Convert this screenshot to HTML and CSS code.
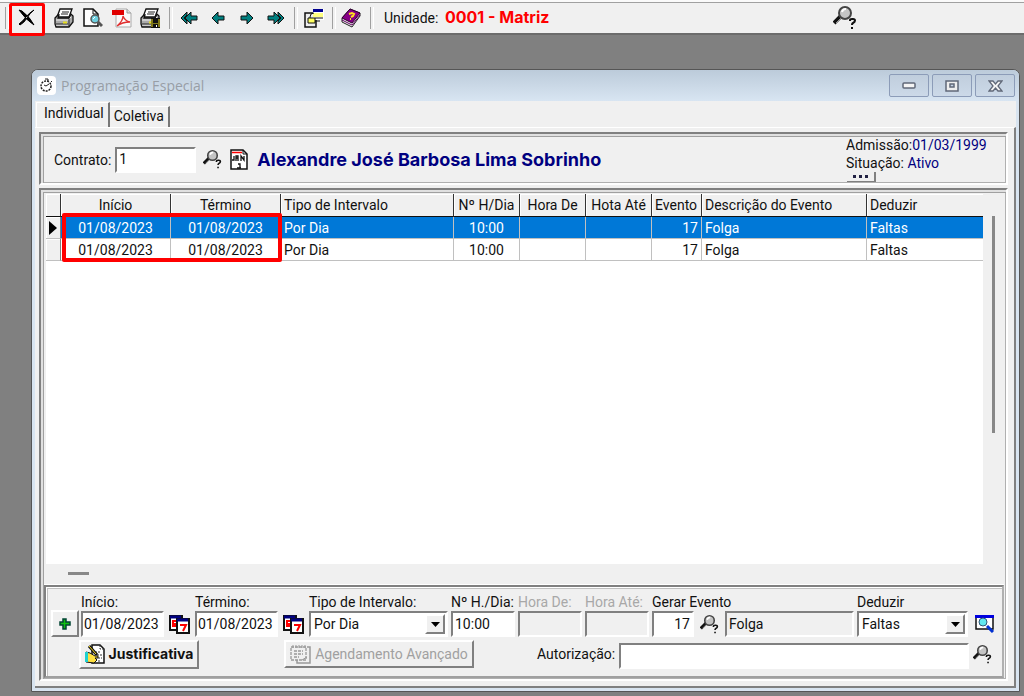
FILE: index.html
```html
<!DOCTYPE html>
<html lang="pt-BR">
<head>
    <title>Programação Especial</title>
    <meta charset="UTF-8">
    <link rel="stylesheet" href="styles.css">
</head>
<body>

<!-- shared icons -->
<svg class="defs" aria-hidden="true">
    <symbol id="printer" viewBox="0 0 20 20">
        <path d="M6 1h12l-3 8H3z" fill="#fff" stroke="#111" stroke-width="1.300"/>
        <path d="M8 4h7M7 6h7" stroke="#222"/>
        <path d="M1 10l3-3h1l-1 3h11l2-4 2 2v6l-4 5H2l-1-3z" fill="#aaa" stroke="#111" stroke-width="1.300"/>
        <path d="M2 12h12l3-3M2 17h12" stroke="#eee" fill="none"/>
        <path d="M2 16h12M15 10v8" stroke="#222"/>
        <path d="M9 14.500h4" stroke="#e8e020" stroke-width="2"/>
    </symbol>
    <symbol id="lupa" viewBox="0 0 24 24">
        <path d="M1 17l7-7" stroke="#111" stroke-width="4"/>
        <path d="M3 17l5-5" stroke="#999"/>
        <circle cx="12" cy="7" r="6" fill="#c4c4c4" stroke="#444" stroke-width="2"/>
        <path d="M9 6a4 4 0 0 1 4-3" fill="none" stroke="#fff" stroke-width="2"/>
        <path d="M17 15v-1q0-1 2-1h1q2 0 2 1.500t-2 2.500q-1 .5-1 2M18 22h2" fill="none" stroke="#111" stroke-width="2"/>
    </symbol>
    <symbol id="seta" viewBox="0 0 14 14">
        <path d="M1 7l6-6v4h6v4H7v4z" fill="#008080" stroke="#111"/>
    </symbol>
    <symbol id="seta2" viewBox="0 0 18 14">
        <path d="M5 7l6-6v4h6v4h-6v4z" fill="#008080" stroke="#111"/>
        <path d="M1 7l6-6v3L4 7l3 3v3z" fill="#008080" stroke="#111"/>
    </symbol>
    <symbol id="calendario" viewBox="0 0 21 19">
        <path d="M1 1h12v14H1z" fill="#fff" stroke="#111" stroke-width="2"/>
        <path d="M1 2h11" stroke="#000080" stroke-width="3"/>
        <path d="M7 6H4v3h3M6 8v3H3" fill="none" stroke="#f00" stroke-width="2"/>
        <path d="M8 4h12v14H8z" fill="#fff" stroke="#111" stroke-width="2"/>
        <path d="M8 5h11" stroke="#000080" stroke-width="3"/>
        <path d="M11 10h6l-3 6" fill="none" stroke="#f00" stroke-width="2"/>
    </symbol>
    <symbol id="drop" viewBox="0 0 9 5">
        <path d="M0 0h9L4.500 5z" fill="#000"/>
    </symbol>
</svg>

<header class="toolbar">
    <span class="sep"></span>
    <button class="tool marked" title="Fechar"><svg width="18" height="18" viewBox="0 0 18 18"><path d="M1 1l3 1q8 6 12 14q-8-5-15-15zM16 1q-5 3-8 7t-7 7l1 1q4-2 7-7t7-8z" fill="#000" stroke="#000"/></svg></button>
    <span class="gap"></span>
    <button class="tool" title="Imprimir"><svg width="20" height="20"><use href="#printer"/></svg></button>
    <button class="tool" title="Visualizar"><svg width="20" height="20" viewBox="0 0 20 20"><path d="M1 1h9l5 5v12H1z" fill="#fff" stroke="#111" stroke-width="1.500"/><path d="M10 1v5h5" fill="none" stroke="#111"/><path d="M15 14l4 4" stroke="#555" stroke-width="3"/><circle cx="12" cy="11" r="4" fill="#6fd0e0" stroke="#555" stroke-width="1.500"/><path d="M10 11l2-2" stroke="#fff"/></svg></button>
    <button class="tool" title="PDF"><svg width="20" height="20" viewBox="0 0 20 20"><path d="M4 1h11l4 4v14H4z" fill="#fafafa" stroke="#aaa"/><path d="M15 1v4h4" fill="#ddd" stroke="#999"/><path d="M0 2h12v5H0z" fill="#e00000"/><path d="M11 8q0 5-6 10q5-4 13-4q-5-1-7-6z" fill="none" stroke="#e03030" stroke-width="1.300"/></svg></button>
    <button class="tool" title="Imprimir e salvar"><svg width="21" height="20" viewBox="0 0 21 20"><use href="#printer" width="20" height="20"/><path d="M11 10h9v10h-9z" fill="#111"/><path d="M11 11h2v8h-2zM18 11h2v8h-2zM13 15h5v1h-5z" fill="#807818"/><path d="M16 17h1v2h-1z" fill="#fff"/></svg></button>
    <span class="sep"></span>
    <button class="tool" title="Primeiro"><svg width="18" height="14"><use href="#seta2"/></svg></button>
    <button class="tool" title="Anterior"><svg width="14" height="14"><use href="#seta"/></svg></button>
    <button class="tool flip" title="Próximo"><svg width="14" height="14"><use href="#seta"/></svg></button>
    <button class="tool flip" title="Último"><svg width="18" height="14"><use href="#seta2"/></svg></button>
    <span class="sep"></span>
    <button class="tool" title="Permissões"><svg width="20" height="20" viewBox="0 0 20 20"><path d="M1 5h11v14H1z" fill="#eee" stroke="#111" stroke-width="1.500"/><path d="M9 1h11v11H9z" fill="#fff"/><path d="M9 1h10v3H9z" fill="#000090"/><path d="M9 5h10v4H9z" fill="#ffff80"/><path d="M6 12V9q0-4 4-4M11 10h8M10 13h6" stroke="#111" fill="none"/><path d="M4 10h7v5H4z" fill="#ffff60" stroke="#111"/></svg></button>
    <span class="sep"></span>
    <button class="tool" title="Ajuda"><svg width="21" height="20" viewBox="0 0 21 20"><path d="M9 1l10 4v3l-8 11-10-5v-4z" fill="#eee" stroke="#222"/><path d="M9 1l10 4-8 10L1 10z" fill="#860086" stroke="#300030"/><path d="M1 12l10 5 8-10" fill="none" stroke="#600060"/><path d="M8 6l3-1 2 1-1 2-2 1M9 11h1" fill="none" stroke="#ffe020" stroke-width="2"/></svg></button>
    <span class="sep"></span>
    <span class="unit">Unidade: <b>0001 - Matriz</b></span>
    <button class="tool find" title="Pesquisar"><svg width="24" height="24"><use href="#lupa"/></svg></button>
</header>

<main class="desktop">
<section class="window">
    <div class="titlebar">
        <span class="app-icon"><svg width="15" height="15" viewBox="0 0 15 15"><circle cx="7" cy="8" r="5" fill="none" stroke="#222" stroke-width="1.500" stroke-dasharray="2 1"/><path d="M7 8l3-2M7 8L5 7M6 1h3v2M12 3l1 1" stroke="#222" fill="none"/></svg></span>
        <h1>Programação Especial</h1>
        <button class="win-btn" title="Minimizar"><svg width="14" height="7" viewBox="0 0 14 7"><rect x="1" y="1" width="12" height="5" rx="1" fill="#f4f4f4" stroke="#606878" stroke-width="1.500"/></svg></button>
        <button class="win-btn" title="Maximizar"><svg width="14" height="12" viewBox="0 0 14 12"><rect x="1" y="1" width="12" height="10" fill="#eee" stroke="#606878" stroke-width="1.500"/><rect x="5" y="4" width="4" height="3" fill="#c8d4e4" stroke="#606878" stroke-width="1.500"/></svg></button>
        <button class="win-btn" title="Fechar"><svg width="15" height="12" viewBox="0 0 15 12"><path d="M1 1h4l2.500 3L10 1h4l-4 5 4 5h-4L7.500 8 5 11H1l4-5z" fill="#f4f4f4" stroke="#606878" stroke-width="1.300"/></svg></button>
    </div>

    <div class="client">
        <nav class="tabs">
            <button class="tab active">Individual</button>
            <button class="tab">Coletiva</button>
        </nav>

        <div class="page">
            <!-- contract -->
            <div class="panel contract">
                <label for="contrato">Contrato:</label>
                <input type="text" id="contrato" value="1">
                <button class="icon-btn" title="Pesquisar"><svg width="19" height="19"><use href="#lupa"/></svg></button>
                <button class="icon-btn" title="Calendário"><svg width="18" height="21" viewBox="0 0 18 21"><path d="M1 1h12l4 4v15H1z" fill="#fff" stroke="#111" stroke-width="1.500"/><path d="M13 1v4h4" fill="none" stroke="#111"/><path d="M2 3.500h10" stroke="#f00" stroke-width="1.500"/><path d="M4 7v4H2M6 12V7h2v5M6 9h2M11 12V7l3 4V7v5M8 15h2v4M7 19h4" fill="none" stroke="#111" stroke-width="1.300"/></svg></button>
                <strong class="employee">Alexandre José Barbosa Lima Sobrinho</strong>
                <div class="status">
                    <div>Admissão:<span>01/03/1999</span></div>
                    <div>Situação: <span>Ativo</span></div>
                    <button class="more" title="Mais"><i></i><i></i><i></i></button>
                </div>
            </div>

            <div class="panel body">
                <div class="grid">
                    <div class="sheet">
                        <table>
                            <colgroup>
                                <col class="c-mark"><col class="c-date"><col class="c-date"><col class="c-type">
                                <col class="c-hour"><col class="c-hour"><col class="c-hour"><col class="c-event">
                                <col class="c-desc"><col>
                            </colgroup>
                            <thead>
                                <tr>
                                    <th></th>
                                    <th class="mid">Início</th>
                                    <th class="mid">Término</th>
                                    <th>Tipo de Intervalo</th>
                                    <th class="mid">Nº H/Dia</th>
                                    <th class="mid">Hora De</th>
                                    <th class="mid">Hota Até</th>
                                    <th>Evento</th>
                                    <th>Descrição do Evento</th>
                                    <th>Deduzir</th>
                                </tr>
                            </thead>
                            <tbody>
                                <tr class="selected">
                                    <th><svg width="8" height="14" viewBox="0 0 8 14"><path d="M0 0l8 7-8 7z"/></svg></th>
                                    <td class="mid">01/08/2023</td>
                                    <td class="mid">01/08/2023</td>
                                    <td>Por Dia</td>
                                    <td class="mid">10:00</td>
                                    <td></td>
                                    <td></td>
                                    <td class="num">17</td>
                                    <td>Folga</td>
                                    <td>Faltas</td>
                                </tr>
                                <tr>
                                    <th></th>
                                    <td class="mid">01/08/2023</td>
                                    <td class="mid">01/08/2023</td>
                                    <td>Por Dia</td>
                                    <td class="mid">10:00</td>
                                    <td></td>
                                    <td></td>
                                    <td class="num">17</td>
                                    <td>Folga</td>
                                    <td>Faltas</td>
                                </tr>
                            </tbody>
                        </table>
                        <div class="highlight"></div>
                    </div>
                    <div class="vscroll"><span></span></div>
                    <div class="hscroll"><span></span></div>
                </div>

                <!-- edit form -->
                <form class="edit">
                    <div class="line">
                        <button type="button" class="btn add" title="Incluir"><svg width="12" height="12" viewBox="0 0 12 12"><path d="M4 1h3v3h4v3H7v4H4V7H1V4h3z" fill="#10c010" stroke="#043" stroke-width="1.500"/></svg></button>
                        <div class="field date"><label for="inicio">Início:</label><input type="text" id="inicio" value="01/08/2023"></div>
                        <button type="button" class="icon-btn cal" title="Calendário"><svg width="21" height="19"><use href="#calendario"/></svg></button>
                        <div class="field date"><label for="termino">Término:</label><input type="text" id="termino" value="01/08/2023"></div>
                        <button type="button" class="icon-btn cal" title="Calendário"><svg width="21" height="19"><use href="#calendario"/></svg></button>
                        <div class="field type"><label for="tipo">Tipo de Intervalo:</label>
                            <div class="combo"><select id="tipo"><option>Por Dia</option></select><span><svg width="9" height="5"><use href="#drop"/></svg></span></div>
                        </div>
                        <div class="field hour"><label for="horas">Nº H./Dia:</label><input type="text" id="horas" value="10:00"></div>
                        <div class="field hour"><label for="de" class="off">Hora De:</label><input type="text" id="de" disabled></div>
                        <div class="field hour"><label for="ate" class="off">Hora Até:</label><input type="text" id="ate" disabled></div>
                        <div class="field event"><label for="evento">Gerar Evento</label><input type="text" id="evento" value="17"></div>
                        <button type="button" class="icon-btn cal" title="Pesquisar"><svg width="19" height="19"><use href="#lupa"/></svg></button>
                        <input type="text" class="desc" value="Folga" readonly aria-label="Descrição do Evento">
                        <div class="field deduct"><label for="deduzir">Deduzir</label>
                            <div class="combo"><select id="deduzir"><option>Faltas</option></select><span><svg width="9" height="5"><use href="#drop"/></svg></span></div>
                        </div>
                        <button type="button" class="icon-btn cal last" title="Visualizar"><svg width="20" height="18" viewBox="0 0 20 18"><path d="M1 1h17v13H1z" fill="#fff" stroke="#111" stroke-width="1.500"/><path d="M0 1.500h19" stroke="#0000e0" stroke-width="3"/><path d="M12 11l6 6" stroke="#0030d0" stroke-width="3"/><circle cx="8" cy="7" r="4" fill="#60e8f0" stroke="#357"/></svg></button>
                    </div>
                    <div class="line second">
                        <button type="button" class="btn justify"><svg width="20" height="20" viewBox="0 0 20 20"><path d="M7 1h8l4 4v14H7z" fill="#fff" stroke="#111" stroke-width="1.500"/><path d="M15 1v4h4M10 8h6M12 11h5M13 14h4M13 17h3" stroke="#333" fill="none" stroke-dasharray="2 1"/><path d="M1 8l4 1 5 3h3v2h-3l2 2-3 3-8-1z" fill="#ffe040" stroke="#111"/><path d="M0 8h3v10H0z" fill="#20d0d0"/><path d="M4 2l8 9" stroke="#111" stroke-width="3"/><path d="M4 2l7 8" stroke="#ffe020"/></svg>Justificativa</button>
                        <button type="button" class="btn advanced" disabled><svg width="21" height="20" viewBox="0 0 21 20"><path d="M17 3h3v16H7v-3" fill="none" stroke="#999" stroke-width="1.500"/><path d="M1 3h15v13H1zM4 7h9M4 10h9M4 13h5" fill="none" stroke="#999" stroke-width="1.300" stroke-dasharray="3 1"/><path d="M3 1v3M6 1v3M9 1v3M12 1v3M15 1v3M12 16l5-3" stroke="#999"/></svg>Agendamento Avançado</button>
                        <label for="autorizacao">Autorização:</label>
                        <input type="text" id="autorizacao" class="auth">
                        <button type="button" class="icon-btn last" title="Pesquisar"><svg width="19" height="19"><use href="#lupa"/></svg></button>
                    </div>
                </form>
            </div>
        </div>
    </div>
</section>
</main>

</body>
</html>
```
FILE: styles.css
```css
* {
  box-sizing: border-box;
}

body {
  margin: 0;
  min-height: 100vh;
  display: flex;
  flex-direction: column;
  background-color: #808080;
  color: #111;
  font: 14px/18px Roboto, "Liberation Sans", sans-serif;
}

button, input, select {
  font: inherit;
  color: inherit;
}

button {
  padding: 0;
  border: 0;
  background: none;
}

svg {
  display: block;
}

.defs {
  position: absolute;
  width: 0;
  height: 0;
}

/* Toolbar */
.toolbar {
  display: flex;
  align-items: center;
  height: 35px;
  padding-left: 1px;
  background-color: #f0f0f0;
  border-top: 2px solid #fafafa;
  border-bottom: 2px solid #6c6c6c;
  box-shadow: inset 0 1px #a0a0a0;
}

.tool {
  display: flex;
  align-items: center;
  justify-content: center;
  width: 29px;
  height: 28px;
  flex: none;
}

.flip svg {
  transform: scaleX(-1);
}

.sep {
  width: 9px;
  height: 22px;
  flex: none;
}

.sep::before {
  content: "";
  display: block;
  width: 2px;
  height: 22px;
  margin-left: 4px;
  border-left: 1px solid #a0a0a0;
  border-right: 1px solid #fff;
}

.gap {
  width: 6px;
  flex: none;
}

/* Red callout round the close button */
.marked {
  position: relative;
  width: 33px;
}

.marked::after {
  content: "";
  position: absolute;
  inset: -1px -2px -4px -1px;
  border: 3px solid #f00;
  border-radius: 2px;
}

.unit {
  width: 446px;
  margin-left: 9px;
  white-space: nowrap;
}

.unit b {
  margin-left: 3px;
  color: #f00;
  font: bold 16px/18px Inter, sans-serif;
}

/* Window */
.desktop {
  flex: 1;
  display: flex;
  padding: 34px 4px 4px 31px;
}

.window {
  flex: 1;
  display: flex;
  flex-direction: column;
  min-width: 0;
  padding: 0 3px 3px;
  border: 1px solid #555;
  border-radius: 7px 7px 0 0;
  background-color: #d8e4f0;
}

.titlebar {
  display: flex;
  align-items: center;
  gap: 3px;
  height: 31px;
  margin: 0 -3px;
  padding: 0 4px 0 5px;
  border-radius: 6px 6px 0 0;
  background: linear-gradient(#bccbda, #d8e5f2);
}

.titlebar h1 {
  flex: 1;
  margin: 0 0 0 2px;
  color: #989ea6;
  font: 14px/20px "Open Sans", "Noto Sans", sans-serif;
}

.app-icon {
  display: flex;
  align-items: center;
  justify-content: center;
  width: 19px;
  height: 19px;
  border-radius: 4px;
  background-color: #fff;
}

.win-btn {
  display: flex;
  align-items: center;
  justify-content: center;
  width: 40px;
  height: 23px;
  border: 1px solid #8c9cb8;
  border-radius: 2px;
  background: linear-gradient(#c0cedd, #ccd9e8);
}

.client {
  flex: 1;
  display: flex;
  flex-direction: column;
  background-color: #f0f0f0;
}

/* Tabs */
.tabs {
  display: flex;
  align-items: flex-end;
  height: 26px;
  padding-left: 1px;
}

.tab {
  height: 21px;
  padding: 0 4px 2px;
  border-top: 1px solid #fff;
  border-right: 2px solid #777;
}

.tab.active {
  height: 25px;
  padding: 0 4px 4px 7px;
  border-left: 1px solid #fff;
}

.page {
  flex: 1;
  display: flex;
  flex-direction: column;
  gap: 3px;
  padding: 4px 6px 5px 4px;
  border-top: 1px solid #fff;
  border-right: 2px solid #808080;
  border-bottom: 2px solid #808080;
}

/* Double bevelled panels */
.panel {
  border: 2px solid;
  border-color: #808080 #fff #fff #808080;
  box-shadow: inset 2px 2px #e0e0e0, inset 3px 3px #a0a0a0, inset -1px -1px #b0b0b0;
}

.contract {
  display: flex;
  align-items: center;
  height: 53px;
  padding: 2px 0 0 13px;
}

input {
  height: 26px;
  min-width: 0;
  padding: 0 2px;
  border: 2px solid;
  border-color: #808080 #fff #fff #808080;
  border-radius: 0;
  background-color: #fff;
  outline: 0;
}

input:disabled,
.desc {
  background-color: #f0f0f0;
}

#contrato {
  width: 81px;
  margin: 0 7px 0 4px;
  padding: 0 2px 2px;
}

.icon-btn {
  display: flex;
  align-items: center;
  justify-content: center;
  width: 21px;
  height: 22px;
  flex: none;
}

.contract .icon-btn {
  width: 27px;
  justify-content: flex-start;
}

.employee {
  flex: 1;
  color: #000080;
  font: bold 18px/20px Inter, sans-serif;
}

.status {
  align-self: flex-start;
  width: 160px;
  height: 46px;
  overflow: hidden;
  white-space: nowrap;
}

.status span {
  color: #000080;
}

.more {
  display: flex;
  justify-content: center;
  gap: 3px;
  width: 29px;
  height: 11px;
  margin-left: 1px;
  padding-top: 3px;
  border-right: 2px solid #808080;
  border-bottom: 2px solid #808080;
  background-color: #f0f0f0;
}

.more i {
  width: 3px;
  height: 3px;
  background-color: #224;
}

/* Grid */
.body {
  flex: 1;
  display: flex;
  flex-direction: column;
  padding: 4px 3px 1px 5px;
}

.grid {
  flex: 1;
  display: grid;
  grid-template-columns: 1fr 20px;
  grid-template-rows: 1fr 21px;
}

.sheet {
  position: relative;
  background-color: #fff;
}

table {
  width: 100%;
  table-layout: fixed;
  border-collapse: separate;
  border-spacing: 0;
}

.c-mark { width: 15px; }
.c-date { width: 110px; }
.c-type { width: 173px; }
.c-hour { width: 66px; }
.c-event { width: 50px; }
.c-desc { width: 165px; }

th, td {
  height: 22px;
  padding: 0 3px;
  border-right: 1px solid #c0c0c0;
  border-bottom: 1px solid #c0c0c0;
  font-weight: normal;
  text-align: left;
  white-space: nowrap;
}

th {
  background-color: #f0f0f0;
  border-right-color: #333;
  box-shadow: inset 1px 1px #fff;
}

tbody th {
  border-right-color: #808080;
}

thead th {
  height: 23px;
  border-bottom-color: #111;
}

th:last-child, td:last-child {
  border-right: 0;
}

.mid {
  text-align: center;
}

.num {
  text-align: right;
}

.selected td {
  color: #fff;
  background-color: #0078d7;
}

/* Red callout round the dates */
.highlight {
  position: absolute;
  left: 16px;
  top: 19px;
  width: 220px;
  height: 49px;
  border: 4px solid #f00;
  border-radius: 2px;
}

.vscroll {
  padding: 22px 0 0 9px;
}

.vscroll span {
  display: block;
  width: 3px;
  height: 217px;
  background-color: #888;
}

.hscroll {
  grid-column: 1 / 3;
  padding: 8px 0 0 22px;
}

.hscroll span {
  display: block;
  width: 21px;
  height: 3px;
  background-color: #888;
}

/* Edit form */
.edit {
  height: 93px;
  margin: 0 -1px 0 -2px;
  padding: 6px 5px 0 5px;
  border: 2px solid;
  border-color: #808080 #b0b0b0 #a0a0a0 #808080;
  box-shadow: 0 -1px #fff, inset 1px 1px #fff, inset 2px 2px #c0c0c0;
}

.line {
  display: flex;
  align-items: flex-end;
}

.field {
  display: flex;
  flex-direction: column;
  flex: none;
  margin-right: 3px;
  white-space: nowrap;
}

.date { width: 83px; }
.type { width: 139px; }
.hour { width: 64px; }
.event { width: 42px; }
.deduct { width: 111px; }

.event input {
  text-align: right;
}

.desc {
  flex: 1;
  margin-right: 3px;
}

.off {
  color: #a8a8a8;
}

.cal {
  height: 26px;
  margin: 0 5px 0 2px;
}

.event + .cal {
  margin: 0 5px 0 2px;
}

.line .last {
  margin: 0 2px 0 3px;
}

.second .last {
  margin: 0 4px 0 3px;
}

.combo {
  display: flex;
  height: 26px;
  padding: 1px;
  border: 2px solid;
  border-color: #808080 #fff #fff #808080;
  background-color: #fff;
}

.combo select {
  flex: 1;
  min-width: 0;
  padding: 0 2px;
  border: 0;
  appearance: none;
  background: none;
}

.combo span,
.btn {
  display: flex;
  align-items: center;
  justify-content: center;
  background-color: #f0f0f0;
  border: 2px solid;
  border-color: #fff #808080 #808080 #fff;
}

.combo span {
  width: 20px;
}

.add {
  width: 28px;
  height: 27px;
  margin-right: 2px;
}

.date input {
  padding: 0 1px;
}

.second {
  align-items: center;
  margin-top: 2px;
  padding-left: 28px;
}

.justify {
  width: 120px;
  height: 29px;
  gap: 4px;
  margin-right: 85px;
  font: bold 14px/18px Inter, sans-serif;
}

.advanced {
  width: 190px;
  height: 28px;
  gap: 4px;
  margin-right: 63px;
  color: #a0a0a0;
}

.auth {
  flex: 1;
  margin-left: 4px;
  margin-top: 4px;
}
```
